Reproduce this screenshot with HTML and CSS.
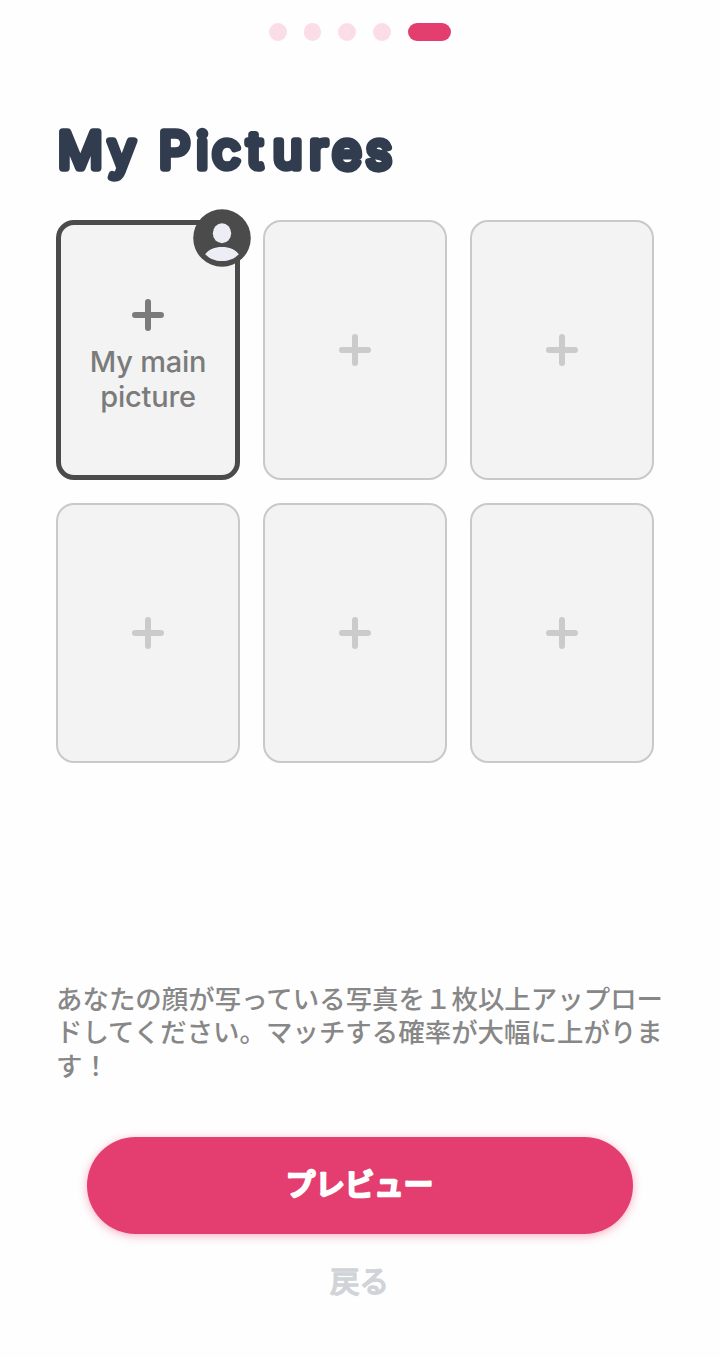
FILE: index.html
```html
<!DOCTYPE html>
<html lang="ja">
  <head>
    <meta charset="utf-8" />
    <title>My Pictures</title>
    <link rel="stylesheet" href="styles.css">
  </head>
  <body>
    <div class="steps">
      <span class="step"></span>
      <span class="step"></span>
      <span class="step"></span>
      <span class="step"></span>
      <span class="step active"></span>
    </div>
    <h1 class="title">
      <svg width="345" height="80" viewBox="0 0 345 80">
        <text x="2 52 90 103 140.500 156.500 191.500 217 253.500 276.500 310" y="59">My Pictures</text>
      </svg>
    </h1>
    <div class="pictures">
      <div class="picture main">
        <svg class="plus" viewBox="0 0 32 32"><path d="M16 3v26M3 16h26" /></svg>
        <span class="picture-label">My main picture</span>
        <svg class="badge" viewBox="0 0 58 58">
          <circle cx="29" cy="29" r="28.8" fill="#4b4b4b" />
          <ellipse cx="29" cy="24.3" rx="9.2" ry="10" fill="#ededf5" />
          <path d="M12.2 45.2C16 40.5 21.5 38 29 38s13 2.500 16.800 7.200C41.500 49.800 36 52 29 52s-12.500-2.200-16.800-6.800z" fill="#ededf5" />
        </svg>
      </div>
      <div class="picture">
        <svg class="plus" viewBox="0 0 32 32"><path d="M16 3v26M3 16h26" /></svg>
      </div>
      <div class="picture">
        <svg class="plus" viewBox="0 0 32 32"><path d="M16 3v26M3 16h26" /></svg>
      </div>
      <div class="picture">
        <svg class="plus" viewBox="0 0 32 32"><path d="M16 3v26M3 16h26" /></svg>
      </div>
      <div class="picture">
        <svg class="plus" viewBox="0 0 32 32"><path d="M16 3v26M3 16h26" /></svg>
      </div>
      <div class="picture">
        <svg class="plus" viewBox="0 0 32 32"><path d="M16 3v26M3 16h26" /></svg>
      </div>
    </div>
    <p class="hint">あなたの顔が写っている写真を１枚以上アップロードしてください。マッチする確率が大幅に上がります！</p>
    <button class="preview-button">
      <svg width="160" height="46" viewBox="0 0 160 46"><text x="79.500" y="33">プレビュー</text></svg>
    </button>
    <button class="back-button">
      <svg width="80" height="46" viewBox="0 0 80 46"><text x="39.500" y="34">戻る</text></svg>
    </button>
  </body>
</html>
```
FILE: styles.css
```css
* {
  box-sizing: border-box;
}

body {
  margin: 0;
  height: 1358px;
  padding: 23px 56px 0;
  background-color: #fefefe;
  font-family: Inter, "Noto Sans CJK JP", sans-serif;
  display: flex;
  flex-direction: column;
  align-items: center;
}

svg {
  display: block;
}

.steps {
  display: flex;
  gap: 17px;
  height: 18px;
}

.step {
  width: 17.7px;
  height: 18px;
  border-radius: 9px;
  background-color: #fadde7;
}

.step.active {
  width: 43.5px;
  background-color: #e33e6f;
}

.title {
  align-self: flex-start;
  margin: 68px 0 0;
  height: 80px;
}

/* round joins soften the letter corners */
.title text {
  font-family: Inter, sans-serif;
  font-size: 49.5px;
  font-weight: 300;
  fill: #313d4f;
  stroke: #313d4f;
  stroke-width: 7.4;
  stroke-linejoin: round;
}

.pictures {
  align-self: flex-start;
  display: grid;
  grid-template-columns: repeat(3, 184px);
  grid-auto-rows: 260px;
  gap: 23px;
  margin-top: 31px;
}

.picture {
  position: relative;
  display: flex;
  flex-direction: column;
  align-items: center;
  justify-content: center;
  background-color: #f3f3f3;
  border: 2px solid #c9c9c9;
  border-radius: 18px;
}

.picture.main {
  padding-top: 12px;
  border: 5px solid #4b4b4b;
}

.plus {
  width: 32px;
  height: 32px;
  fill: none;
  stroke: #cbcbcb;
  stroke-width: 6;
  stroke-linecap: round;
}

.main .plus {
  stroke: #7b7b7b;
}

.picture-label {
  width: 140px;
  margin-top: 13px;
  font-size: 29px;
  font-weight: 500;
  line-height: 35px;
  letter-spacing: -0.2px;
  text-align: center;
  color: #7b7b7b;
}

/* sits over the top right corner of the main picture */
.badge {
  position: absolute;
  top: -16px;
  right: -16px;
  width: 58px;
  height: 58px;
}

.hint {
  align-self: flex-start;
  width: 614px;
  margin: 217.5px 0 0;
  font-family: "Noto Sans CJK JP", sans-serif;
  font-size: 26.4px;
  font-weight: 500;
  line-height: 33.8px;
  letter-spacing: 0.06px;
  color: #878787;
  word-break: break-all;
}

.preview-button {
  flex: none;
  display: flex;
  justify-content: center;
  align-items: center;
  width: 546px;
  height: 97px;
  margin-top: 55.1px;
  padding: 0;
  border: none;
  border-radius: 49px;
  background-color: #e33e6f;
  box-shadow: 0 2px 10px rgba(240, 60, 110, 0.4);
  cursor: pointer;
}

.preview-button text,
.back-button text {
  font-family: "Noto Sans CJK JP", sans-serif;
  font-size: 29.5px;
  text-anchor: middle;
  stroke-linejoin: round;
}

.preview-button text {
  font-weight: 500;
  fill: #fff;
  stroke: #fff;
  stroke-width: 2.6;
}

.back-button {
  margin-top: 24px;
  padding: 0;
  border: none;
  background: none;
  cursor: pointer;
}

.back-button text {
  font-weight: 400;
  fill: #d0d4d8;
  stroke: #d0d4d8;
  stroke-width: 1.7;
}
```
